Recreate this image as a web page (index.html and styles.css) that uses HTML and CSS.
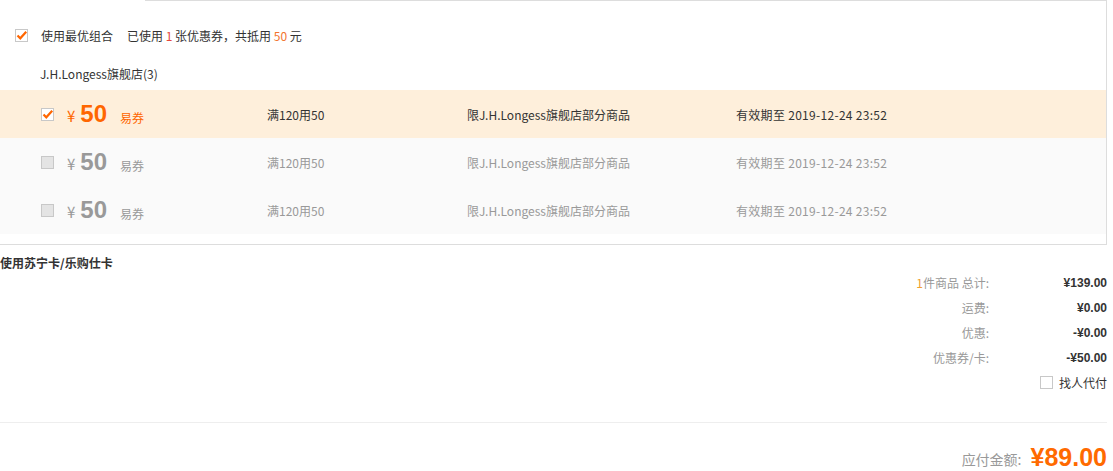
FILE: index.html
```html
<!DOCTYPE html>
<html lang="zh-CN">
<head>
    <meta charset="UTF-8">
    <title>优惠券</title>
    <link rel="stylesheet" href="styles.css">
</head>
<body>
    <div class="page">
        <div class="coupon-box">
            <div class="tab-line"></div>

            <div class="best">
                <span class="check on">
                    <svg viewBox="0 0 13 13" width="13" height="13"><path d="M2.5 6.5 L5.3 9.3 L11.2 2.8" fill="none" stroke="#f60" stroke-width="2.2"/></svg>
                </span>
                <span class="best-title">使用最优组合</span>
                <span class="best-info">已使用 <em class="red">1</em> 张优惠券，共抵用 <em class="orange">50</em> 元</span>
            </div>

            <div class="shop">J.H.Longess旗舰店(3)</div>

            <div class="coupon active">
                <div class="c-amount">
                    <span class="check on">
                        <svg viewBox="0 0 13 13" width="13" height="13"><path d="M2.5 6.5 L5.3 9.3 L11.2 2.8" fill="none" stroke="#f60" stroke-width="2.2"/></svg>
                    </span>
                    <span class="yen">¥</span><span class="num">50</span><span class="type">易券</span>
                </div>
                <div class="c-rule">满120用50</div>
                <div class="c-scope">限J.H.Longess旗舰店部分商品</div>
                <div class="c-date">有效期至 2019-12-24 23:52</div>
            </div>

            <div class="coupon">
                <div class="c-amount">
                    <span class="check off"></span>
                    <span class="yen">¥</span><span class="num">50</span><span class="type">易券</span>
                </div>
                <div class="c-rule">满120用50</div>
                <div class="c-scope">限J.H.Longess旗舰店部分商品</div>
                <div class="c-date">有效期至 2019-12-24 23:52</div>
            </div>

            <div class="coupon">
                <div class="c-amount">
                    <span class="check off"></span>
                    <span class="yen">¥</span><span class="num">50</span><span class="type">易券</span>
                </div>
                <div class="c-rule">满120用50</div>
                <div class="c-scope">限J.H.Longess旗舰店部分商品</div>
                <div class="c-date">有效期至 2019-12-24 23:52</div>
            </div>
        </div>

        <div class="summary-wrap">
            <div class="card-title">使用苏宁卡/乐购仕卡</div>
            <div class="summary">
                <div class="s-row"><span class="s-label"><em class="count">1</em>件商品 总计:</span><span class="s-value">¥139.00</span></div>
                <div class="s-row"><span class="s-label">运费:</span><span class="s-value">¥0.00</span></div>
                <div class="s-row"><span class="s-label">优惠:</span><span class="s-value">-¥0.00</span></div>
                <div class="s-row"><span class="s-label">优惠券/卡:</span><span class="s-value">-¥50.00</span></div>
                <div class="s-row"><span class="check blank"></span><span class="proxy">找人代付</span></div>
            </div>
        </div>

        <div class="divider"></div>

        <div class="total">
            <span class="t-label">应付金额:</span>
            <span class="t-value">¥89.00</span>
        </div>
    </div>
</body>
</html>
```

FILE: styles.css
```css
body {
    margin: 0;
    background-color: #fff;
    color: #333;
    font-family: "Noto Sans CJK SC", "Liberation Sans", sans-serif;
    font-size: 12px;
}

em {
    font-style: normal;
}

.page {
    width: 1107px;
}

.coupon-box {
    border-right: 1px solid #ddd;
    border-bottom: 1px solid #ddd;
    padding-bottom: 10px;
}

.tab-line {
    margin-left: 145px;
    border-top: 1px solid #ddd;
}

.best {
    display: flex;
    align-items: center;
    height: 30px;
    margin-top: 19px;
    padding-left: 15px;
    color: #333;
}

.best-title {
    margin-left: 13px;
}

.best-info {
    margin-left: 14px;
}

.red {
    color: #e5473c;
}

.orange {
    color: #f2742e;
}

.shop {
    height: 32px;
    line-height: 32px;
    padding-top: 8px;
    padding-left: 40px;
    color: #333;
}

.check {
    display: inline-block;
    box-sizing: border-box;
    width: 13px;
    height: 13px;
    border: 1px solid #c8c8c8;
    background-color: #fff;
    position: relative;
}

.check svg {
    position: absolute;
    left: -1px;
    top: -1px;
}

.check.off {
    background-color: #e4e4e4;
}

.coupon {
    display: grid;
    grid-template-columns: 226px 200px 269px auto;
    align-items: center;
    height: 48px;
    padding-left: 41px;
    background-color: #fafafa;
    color: #999;
}

.coupon.active {
    background-color: #feefdb;
    color: #333;
}

.c-date {
    letter-spacing: 0.3px;
}

.c-amount {
    display: flex;
    align-items: center;
}

.yen {
    margin-left: 13px;
    font-size: 15px;
    color: #999;
    padding-top: 2px;
}

.num {
    margin-left: 5px;
    font-family: "Liberation Sans", Arial, sans-serif;
    font-weight: bold;
    font-size: 24px;
    color: #999;
}

.type {
    margin-left: 13px;
    padding-top: 6px;
    color: #999;
}

.coupon.active .yen,
.coupon.active .num,
.coupon.active .type {
    color: #f60;
}

.summary-wrap {
    display: flex;
    justify-content: space-between;
    padding-top: 8px;
}

.card-title {
    line-height: 20px;
    font-weight: bold;
    color: #333;
}

.summary {
    padding-top: 17px;
}

.s-row {
    display: flex;
    justify-content: flex-end;
    align-items: center;
    height: 25px;
}

.s-label {
    color: #999;
}

.s-label .count {
    color: #f0a030;
}

.s-value {
    width: 118px;
    text-align: right;
    font-family: "Liberation Sans", Arial, sans-serif;
    font-weight: bold;
    color: #333;
}

.proxy {
    margin-left: 6px;
    color: #333;
}

.divider {
    margin-top: 27px;
    border-top: 1px solid #eee;
}

.total {
    display: flex;
    justify-content: flex-end;
    align-items: center;
    height: 36px;
    margin-top: 16px;
}

.t-label {
    font-size: 14px;
    color: #999;
    padding-top: 4px;
}

.t-value {
    margin-left: 9px;
    font-family: "Liberation Sans", Arial, sans-serif;
    font-weight: bold;
    font-size: 25px;
    color: #ff6a00;
}
```
